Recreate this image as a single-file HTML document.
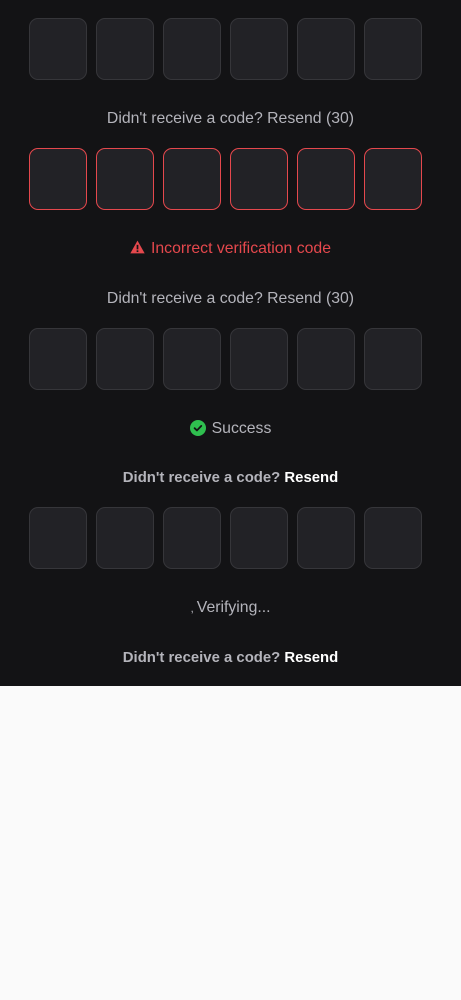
<!DOCTYPE html>
<html><head><meta charset="utf-8"><style>
html,body{margin:0;padding:0;width:461px;height:1000px;background:#fafafa;font-family:"Liberation Sans",sans-serif;}
.dark{position:absolute;left:0;top:0;width:461px;height:686px;background:#131315;}
.row{position:absolute;left:29px;height:62px;width:400px;}
.b{position:absolute;top:0;box-sizing:border-box;width:58px;height:62px;border:1.5px solid #36363a;background:#222226;border-radius:9px;}
.row.err .b{border-color:#e5484d;}
.t{position:absolute;left:0;width:461px;text-align:center;font-size:15.8px;color:#b4b4bb;line-height:20px;}
.t b{color:#fff;font-weight:bold;}
.bold{font-weight:bold;color:#b4b4bb;font-size:14.9px;}
.red{color:#e5484d;}
</style></head><body>
<div class="dark">
<div class="row" style="top:18px"><div class="b" style="left:0"></div><div class="b" style="left:67px"></div><div class="b" style="left:134px"></div><div class="b" style="left:201px"></div><div class="b" style="left:268px"></div><div class="b" style="left:335px"></div></div>
<div class="t" style="top:109px">Didn't receive a code? Resend (30)</div>
<div class="row err" style="top:148px"><div class="b" style="left:0"></div><div class="b" style="left:67px"></div><div class="b" style="left:134px"></div><div class="b" style="left:201px"></div><div class="b" style="left:268px"></div><div class="b" style="left:335px"></div></div>
<div class="t red" style="top:239px"><svg width="15" height="14" viewBox="0 0 14 13" style="vertical-align:-1px;margin-right:6px"><path d="M7 0.5L13.7 12.5H0.3Z" fill="#e5484d"/><rect x="6.2" y="4.5" width="1.6" height="4.2" fill="#131315"/><rect x="6.2" y="9.6" width="1.6" height="1.6" fill="#131315"/></svg>Incorrect verification code</div>
<div class="t" style="top:289px">Didn't receive a code? Resend (30)</div>
<div class="row" style="top:328px"><div class="b" style="left:0"></div><div class="b" style="left:67px"></div><div class="b" style="left:134px"></div><div class="b" style="left:201px"></div><div class="b" style="left:268px"></div><div class="b" style="left:335px"></div></div>
<div class="t" style="top:419px"><svg width="16" height="16" viewBox="0 0 16 16" style="vertical-align:-3px;margin-right:6px"><circle cx="8" cy="8" r="8" fill="#2fbf4f"/><path d="M4.6 8.2L7 10.4L11.3 5.9" stroke="#131315" stroke-width="1.8" fill="none" stroke-linecap="round" stroke-linejoin="round"/></svg>Success</div>
<div class="t bold" style="top:468px">Didn't receive a code? <b>Resend</b></div>
<div class="row" style="top:507px"><div class="b" style="left:0"></div><div class="b" style="left:67px"></div><div class="b" style="left:134px"></div><div class="b" style="left:201px"></div><div class="b" style="left:268px"></div><div class="b" style="left:335px"></div></div>
<div class="t" style="top:598px"><span style="font-size:12px;margin-right:3px">,</span>Verifying...</div>
<div class="t bold" style="top:648px">Didn't receive a code? <b>Resend</b></div>
</div>
</body></html>
